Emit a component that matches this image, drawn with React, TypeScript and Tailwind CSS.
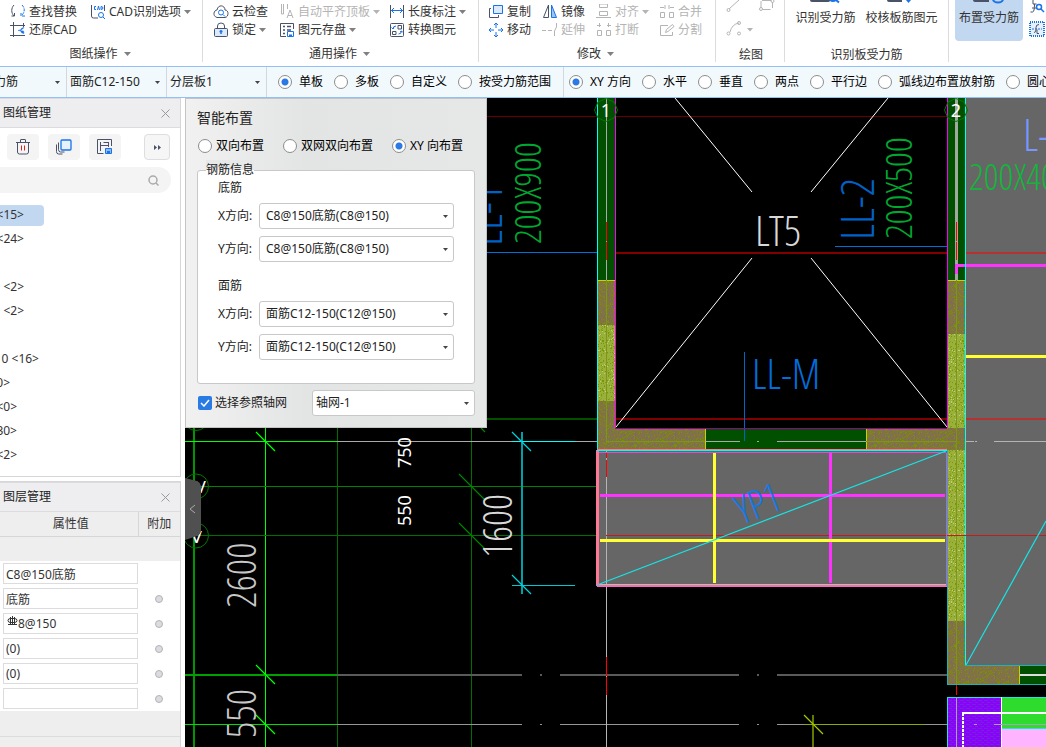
import React from 'react';

/* ---------- small shared pieces ---------- */

function Caret({ className = 'text-[#808080]' }: { className?: string }) {
  return (
    <svg width="7" height="4" viewBox="0 0 7 4" className={`shrink-0 ${className}`} aria-hidden="true">
      <path d="M0 0h7L3.500 4z" fill="currentColor" />
    </svg>
  );
}

function Radio({ name, label, checked = false, gap = 'gap-[7px]' }: { name: string; label: string; checked?: boolean; gap?: string }) {
  return (
    <label className={`flex shrink-0 items-center whitespace-nowrap text-black ${gap}`}>
      <input
        type="radio"
        name={name}
        defaultChecked={checked}
        className="size-[14px] shrink-0 appearance-none rounded-full border border-[#8c8c8c] bg-white checked:bg-[radial-gradient(circle,#2a7ae4_0_3px,#fff_4px)]"
      />
      {label}
    </label>
  );
}

function Drop({ label, value, className }: { label: string; value: string; className: string }) {
  return (
    <div className="relative flex items-center">
      <select aria-label={label} className={`appearance-none text-[#222] outline-none ${className}`}>
        <option>{value}</option>
      </select>
      <svg width="5" height="3" viewBox="0 0 5 3" className="pointer-events-none absolute right-[6px]" aria-hidden="true">
        <path d="M0 0h5L2.500 3z" fill="#444" />
      </svg>
    </div>
  );
}

type ToolProps = { label: string; icon: React.ReactNode; caret?: boolean; off?: boolean };

function Tool({ label, icon, caret, off }: ToolProps) {
  return (
    <button type="button" className={`flex h-6 items-center gap-[3px] whitespace-nowrap ${off ? 'text-[#b4b4b4]' : 'text-[#333]'}`}>
      <svg width="16" height="16" viewBox="0 0 16 16" fill="none" stroke="currentColor" className="shrink-0" aria-hidden="true">
        {icon}
      </svg>
      {label}
      {caret && <Caret className={off ? 'text-[#b4b4b4]' : 'text-[#808080]'} />}
    </button>
  );
}

const B = '#1a73e8';
const S = '#4a5268';

const icons = {
  find: (
    <>
      <path d="M4 1C1 4 1 9 4 12M1.500 12H4.500V9" stroke={S} />
      <path d="M12 1c3 3 3 7 0 10M15 12h-4V9" stroke={B} strokeDasharray="3 1" />
    </>
  ),
  cadOpt: (
    <>
      <path d="M1.500 1v11q0 2 2 2H8M14.500 1v6" stroke={S} />
      <path d="M6 2.500H4.500v3H6M7.500 6l1-4 1 4M11 2.500v3q2 0 2-1.500t-2-1.500" stroke={B} />
      <circle cx="11" cy="11" r="2.500" stroke={B} />
      <path d="M13 13l2 2" stroke={B} />
    </>
  ),
  restore: (
    <>
      <path d="M0 3.500h15M3.500 0v15M0 13.500h15M13.500 1v4" stroke={S} />
      <path d="M14 5.500q-3 0-3.500 3 .500 3 3.500 3l-.500-2.500L8 8.500l4-1z" fill={B} stroke={B} strokeWidth=".5" />
    </>
  ),
  cloud: (
    <>
      <path d="M4 13.500C-1 12 1 6 4 6 5 0 12 1 12 6c4 0 4 7 0 7.500z" stroke={S} />
      <circle cx="8" cy="8.500" r="2.500" stroke={B} />
      <path d="M10 10.500l2 2" stroke={B} />
    </>
  ),
  lock: (
    <>
      <path d="M4.500 6V4q0-3 3.500-3t3.500 3v2" stroke={S} />
      <rect x="1.500" y="6.500" width="13" height="8" rx="1" stroke={S} fill="#dbe9fb" />
      <path d="M8 8v4M6.500 9.500h3" stroke={B} strokeWidth="1.500" />
    </>
  ),
  align: <path d="M2.500 0v10h2V0M8.500 0v5M8 14l3-8 3 8M9 11.500h4" />,
  store: (
    <>
      <path d="M14.500 7V1.500h-13v13H7" stroke={S} />
      <path d="M4 4.500h2M8 4.500h4M4 8h2M4 11.500h2M8 8h4" stroke={S} strokeWidth="1.500" />
      <path d="M8.500 9.500h6v5h-6z" stroke={B} />
      <path d="M10 12.500h3v2h-3z" fill={B} stroke="none" />
    </>
  ),
  dim: (
    <>
      <path d="M1.500 1v13M14.500 1v13" stroke={S} />
      <path d="M2 6.500h12M5 4L2.500 6.500 5 9M11 4l2.500 2.500L11 9" stroke={B} />
    </>
  ),
  convert: (
    <>
      <rect x="1.500" y="1.500" width="13" height="13" rx="1" stroke={S} />
      <path d="M9 3.500h3.500V7H9zM3.500 9.500H7v3H3.500z" stroke={S} />
      <path d="M4 7q0-3 3-3M5 5.500L4 7 2.500 5.500M12.500 9q0 3-3 3M11 10l1.500-1L14 10.500" stroke={B} />
    </>
  ),
  copy: (
    <>
      <path d="M5.500 1.500h9v8h-9z" stroke={B} fill="#dbe9fb" />
      <path d="M3 4.500H1.500v9h9V11" stroke={S} />
    </>
  ),
  mirror: (
    <>
      <path d="M6.500 1v12.500h-5z" stroke={S} />
      <path d="M9.500 1v12.500h5z" stroke={B} fill="#9cc3f5" />
    </>
  ),
  move: (
    <path
      d="M8 1v5M8 10v5M1 8h5M10 8h5M6 3l2-2 2 2M6 13l2 2 2-2M3 6L1 8l2 2M13 6l2 2-2 2"
      stroke={B}
    />
  ),
  alignTo: <path d="M3.500 0h8v3.500h-8zM3.500 7.500h8v4h-8zM0 13.500h15" />,
  merge: <path d="M1.500 8.500h4v5h-4zM10.500 8.500h4v5h-4zM1 3.500h4M11 3.500h4M6 1v4M10 1v4" />,
  extend: <path d="M0 8.500h4M6 8.500h4M14.500 1v4l-2 4v5" />,
  breakIt: <path d="M1.500 8.500h4v5h-4zM10.500 8.500h4v5h-4zM1 3.500h4M3.500 1v4M11 3.500h4M12.500 1v4" />,
  split: <path d="M9 3.500H1.500v10h12V10M6.500 10.500l1-3 6-5 1.500 2-6 5z" />,
};

const groupTitle = 'flex h-[23px] shrink-0 items-center justify-center gap-[6px] whitespace-nowrap text-[#333]';

function Ribbon() {
  return (
    <header className="flex h-[67px] shrink-0 overflow-hidden border-b border-[#90c0f5] bg-white pb-1 text-[#333]">
      <section className="flex w-[203px] shrink-0 flex-col border-r border-[#dcdcdc] pl-[10px]">
        <div className="grid h-[18px] shrink-0 grid-cols-[80px_auto] items-center pb-[6px]">
          <Tool label="查找替换" icon={icons.find} />
          <Tool label="CAD识别选项" icon={icons.cadOpt} caret />
        </div>
        <div className="flex h-6 shrink-0 items-center">
          <Tool label="还原CAD" icon={icons.restore} />
        </div>
        <div className={`${groupTitle} pr-3`}>
          图纸操作 <Caret />
        </div>
      </section>

      <section className="flex w-[276px] shrink-0 flex-col border-r border-[#dcdcdc] pl-[10px]">
        <div className="grid h-[18px] shrink-0 grid-cols-[66px_110px_auto] items-center pb-[6px]">
          <Tool label="云检查" icon={icons.cloud} />
          <Tool label="自动平齐顶板" icon={icons.align} caret off />
          <Tool label="长度标注" icon={icons.dim} caret />
        </div>
        <div className="grid h-6 shrink-0 grid-cols-[66px_110px_auto] items-center">
          <Tool label="锁定" icon={icons.lock} caret />
          <Tool label="图元存盘" icon={icons.store} caret />
          <Tool label="转换图元" icon={icons.convert} />
        </div>
        <div className={`${groupTitle} pr-3`}>
          通用操作 <Caret />
        </div>
      </section>

      <section className="flex w-[237px] shrink-0 flex-col border-r border-[#dcdcdc] pl-[9px]">
        <div className="grid h-[18px] shrink-0 grid-cols-[54px_54px_63px_auto] items-center pb-[6px]">
          <Tool label="复制" icon={icons.copy} />
          <Tool label="镜像" icon={icons.mirror} />
          <Tool label="对齐" icon={icons.alignTo} caret off />
          <Tool label="合并" icon={icons.merge} off />
        </div>
        <div className="grid h-6 shrink-0 grid-cols-[54px_54px_63px_auto] items-center">
          <Tool label="移动" icon={icons.move} />
          <Tool label="延伸" icon={icons.extend} off />
          <Tool label="打断" icon={icons.breakIt} off />
          <Tool label="分割" icon={icons.split} off />
        </div>
        <div className={`${groupTitle} pr-3`}>
          修改 <Caret />
        </div>
      </section>

      <section className="flex w-[69px] shrink-0 flex-col items-center border-r border-[#dcdcdc] pl-[2px]">
        <svg width="50" height="43" viewBox="0 0 50 43" fill="none" stroke="#b4b4b4" className="shrink-0" aria-hidden="true">
          <path d="M3 9L13 0M35 1v7M36.500 9.500h8M46.500 2v6M36 .500h9M4 32q2-8 9-9" />
          <circle cx="2.500" cy="10" r="1.500" />
          <circle cx="35" cy="9" r="1.500" />
          <circle cx="46.500" cy="1" r="1.500" />
          <circle cx="2.500" cy="33.500" r="1.500" />
          <circle cx="13" cy="23" r="1.500" />
          <circle cx="13" cy="33.500" r="1.500" />
          <path d="M21 28h6l-3 3.500z" fill="#b4b4b4" stroke="none" />
        </svg>
        <div className="flex h-6 shrink-0 items-center">绘图</div>
      </section>

      <section className="flex w-[164px] shrink-0 flex-col items-center border-r border-[#dcdcdc]">
        <div className="flex h-[43px] shrink-0 gap-[10px]">
          <button type="button" className="flex flex-col items-center">
            <svg width="40" height="8" viewBox="0 0 40 8" aria-hidden="true">
              <path d="M5 0h20v.500q0 1.500-2 1.500H7Q5 2 5 0z" fill={S} />
              <path d="M25 0q3 2 6 0l3 2.500" stroke={B} strokeWidth="2" fill="none" />
            </svg>
            <span className="h-5 leading-5">识别受力筋</span>
          </button>
          <button type="button" className="flex flex-col items-center">
            <svg width="40" height="8" viewBox="0 0 40 8" aria-hidden="true">
              <path d="M5 0h15v2H7Q5 2 5 0z" fill={S} />
              <path d="M24 0h5l-2.500 3z" fill={B} />
            </svg>
            <span className="h-5 leading-5">校核板筋图元</span>
          </button>
        </div>
        <div className="flex h-6 shrink-0 items-center">识别板受力筋</div>
      </section>

      <section className="flex min-w-0 flex-1 gap-[6px] overflow-hidden pl-[6px]">
        <button type="button" className="flex h-[41px] w-[68px] shrink-0 flex-col items-center rounded-b bg-[#c2d8f0]">
          <svg width="40" height="8" viewBox="0 0 40 8" aria-hidden="true">
            <path d="M4 0h16v2H6Q4 2 4 0z" fill={S} />
            <path d="M24 0q1 2.500 5 2.500T34 0" stroke={B} strokeWidth="2" fill="none" />
          </svg>
          <span className="h-5 leading-5">布置受力筋</span>
        </button>
        <svg width="17" height="42" viewBox="0 0 17 42" fill="none" className="shrink-0" aria-hidden="true">
          <path d="M4 0v4h3.500M1.500 12h2q2 0 2-8M3 8h4" stroke={S} />
          <circle cx="10" cy="7" r="2.500" stroke={B} strokeWidth="1.500" />
          <path d="M12 9l3 3" stroke={B} strokeWidth="1.500" />
          <rect x="1" y="22" width="14" height="14" fill="#e6f1fd" stroke={B} strokeWidth="2" strokeDasharray="1 1" />
          <path d="M3 29h10" stroke={B} strokeDasharray="2 1" />
          <path d="M10 24.500q-3 0-3 3v2q0 3-2 3M8 29.500v4h2" stroke={S} />
        </svg>
      </section>
    </header>
  );
}

function OptionsBar() {
  return (
    <div className="flex h-[31px] shrink-0 items-stretch overflow-hidden border-b border-[#90c0f5] bg-[#f2f9fd] text-[#222]">
      <div className="flex w-[67px] shrink-0 justify-end overflow-hidden border-r border-[#d4d8dc]">
        <Drop label="构件类型" value="受力筋" className="h-[30px] w-[90px] pl-[6px]" />
      </div>
      <div className="flex w-[100px] shrink-0 border-r border-[#d4d8dc]">
        <Drop label="构件" value="面筋C12-150" className="h-[30px] w-[99px] pl-[3px]" />
      </div>
      <div className="flex w-[100px] shrink-0 border-r border-[#d4d8dc]">
        <Drop label="分层" value="分层板1" className="h-[30px] w-[99px] pl-[3px]" />
      </div>
      <div className="flex shrink-0 items-center gap-[11px] border-r border-[#d4d8dc] pl-[11px] pr-3">
        <Radio name="scope" label="单板" checked />
        <Radio name="scope" label="多板" />
        <Radio name="scope" label="自定义" />
        <Radio name="scope" label="按受力筋范围" />
      </div>
      <div className="flex min-w-0 items-center gap-[11px] overflow-hidden pl-[5px]">
        <Radio name="direction" label="XY 方向" checked />
        <Radio name="direction" label="水平" />
        <Radio name="direction" label="垂直" />
        <Radio name="direction" label="两点" />
        <Radio name="direction" label="平行边" />
        <Radio name="direction" label="弧线边布置放射筋" />
        <Radio name="direction" label="圆心" />
      </div>
    </div>
  );
}

/* ---------- left panels ---------- */

function PanelHead({ title }: { title: string }) {
  return (
    <div className="flex h-[30px] shrink-0 items-center justify-between border-y border-[#dcdcde] bg-[#eeeef0] pl-[3px] pr-[10px] text-[#222]">
      <h2>{title}</h2>
      <button type="button" aria-label="关闭">
        <svg width="9" height="9" viewBox="0 0 9 9" stroke="#999" aria-hidden="true">
          <path d="M.500.500l8 8M8.500.500l-8 8" />
        </svg>
      </button>
    </div>
  );
}

const sheets = [
  { text: '<15>', cls: 'w-6', on: true },
  { text: '<24>', cls: 'w-6' },
  { text: '', cls: 'w-6' },
  { text: '<2>', cls: 'w-6' },
  { text: '<2>', cls: 'w-6' },
  { text: '', cls: 'w-6' },
  { text: '0 <16>', cls: 'w-[39px]' },
  { text: '<0>', cls: 'w-[10px]' },
  { text: '<0>', cls: 'w-[17px]' },
  { text: '<30>', cls: 'w-[17px]' },
  { text: '<2>', cls: 'w-[17px]' },
];

const toolBtn = 'flex h-[26px] w-8 items-center justify-center rounded bg-[#f4f4f5]';

function SheetPanel() {
  return (
    <section className="flex h-[379px] shrink-0 flex-col border-b border-r border-[#d6d6d8] bg-white">
      <PanelHead title="图纸管理" />
      <div className="flex items-center gap-[9px] pl-[7px] pr-[10px] pt-[6px]">
        <button type="button" aria-label="删除" className={toolBtn}>
          <svg width="14" height="16" viewBox="0 0 14 16" fill="none" stroke={S} aria-hidden="true">
            <path d="M0 3.500h14M4.500 3V1q0-.500.500-.500h4q.500 0 .500.500v2M1.500 4v9q0 2 2 2h7q2 0 2-2V4" />
            <path d="M5.500 6.500v5M8.500 6.500v5" stroke="#e02020" />
          </svg>
        </button>
        <button type="button" aria-label="复制图纸" className={toolBtn}>
          <svg width="16" height="16" viewBox="0 0 16 16" fill="none" stroke={S} aria-hidden="true">
            <rect x="5" y="1" width="10" height="10" rx="1" stroke={B} strokeWidth="1.300" fill="#e6f1fd" />
            <path d="M2.500 3.500v7q0 2.500 2 2.500h4M.500 5.500v7q0 2.500 2 2.500h4" />
          </svg>
        </button>
        <button type="button" aria-label="保存图纸" className={toolBtn}>
          <svg width="16" height="16" viewBox="0 0 16 16" fill="none" stroke={S} aria-hidden="true">
            <path d="M14.500 7V.500H.500v14h6M3.500 3v9M3.500 6.500h8M11.500 3v5M6.500 3.500h5" />
            <path d="M8.500 9.500h6v5h-6z" stroke={B} fill="#8fbcf5" />
            <path d="M10 12h3v2.500h-3z" fill={B} stroke="none" />
          </svg>
        </button>
        <button type="button" aria-label="更多" className="ml-auto flex size-[26px] items-center justify-center rounded border border-[#dedee0] bg-[#f6f6f7]">
          <svg width="7" height="5" viewBox="0 0 7 5" fill={S} aria-hidden="true">
            <path d="M0 0l3 2.500L0 5zM4 0l3 2.500L4 5z" />
          </svg>
        </button>
      </div>
      <label className="mr-[9px] mt-[7px] flex h-[26px] items-center rounded-r-full bg-[#f4f4f5] pr-3">
        <input type="text" aria-label="搜索图纸" className="h-full min-w-0 flex-1 bg-transparent outline-none" />
        <svg width="11" height="11" viewBox="0 0 11 11" fill="none" stroke="#aaa" strokeWidth="1.500" aria-hidden="true">
          <circle cx="5" cy="5" r="4" />
          <path d="M8 8l2.500 2.500" />
        </svg>
      </label>
      <ul className="pt-[10px]">
        {sheets.map((s, i) => (
          <li key={i} className="flex h-6 items-center">
            <span className={`flex h-[21px] items-center ${s.on ? 'w-11 rounded-r bg-[#c2d8f0]' : ''}`}>
              <span className={`flex justify-end overflow-hidden whitespace-nowrap text-[#333] ${s.cls}`}>{s.text}</span>
            </span>
          </li>
        ))}
      </ul>
    </section>
  );
}

const props = ['C8@150底筋', '底筋', '8@150', '(0)', '(0)', ''];

function LayerPanel() {
  return (
    <section className="flex flex-1 flex-col border-r border-t border-[#d6d6d8] bg-[#eeeeee]">
      <PanelHead title="图层管理" />
      <table className="w-full table-fixed border-collapse text-[#333]">
        <colgroup>
          <col className="w-[138px]" />
          <col />
        </colgroup>
        <thead>
          <tr className="h-6 bg-[#eeeeee]">
            <th className="border-b border-r border-[#d6d6d8] pl-1 font-normal">属性值</th>
            <th className="border-b border-[#d6d6d8] font-normal">附加</th>
          </tr>
        </thead>
        <tbody>
          <tr className="h-[25px]">
            <td colSpan={2} />
          </tr>
          {props.map((p, i) => (
            <tr key={i} className="h-[25px] bg-white">
              <td className="p-0 pl-[3px]">
                <div className="flex h-[21px] items-center border border-[#dcdcde] bg-white pl-[2px]">
                  {i === 2 && (
                    <svg width="11" height="11" viewBox="0 0 11 11" fill="none" stroke="#333" className="mb-1 ml-px shrink-0" aria-hidden="true">
                      <path d="M5.500 0v9M3.500 2.500h4q2.500 0 2.500 2t-2.500 2h-4q-2.500 0-2.500-2t2.500-2zM3.500 1v7M7.500 1v7M1 8.500h9" />
                    </svg>
                  )}
                  <input
                    type="text"
                    aria-label={`属性值${i + 1}`}
                    defaultValue={p}
                    className="h-full w-full min-w-0 bg-transparent outline-none"
                  />
                </div>
              </td>
              <td className="p-0">
                {i > 0 && (
                  <input
                    type="checkbox"
                    aria-label={`附加${i + 1}`}
                    className="mx-auto block size-2 appearance-none rounded-full border border-[#b4b4b8] bg-[#dcdce0]"
                  />
                )}
              </td>
            </tr>
          ))}
          <tr className="h-[25px] border-b border-[#dcdcde]">
            <td colSpan={2} />
          </tr>
        </tbody>
      </table>
    </section>
  );
}

/* ---------- floating dialog ---------- */

function RebarRow({ label, value }: { label: string; value: string }) {
  return (
    <div className="flex h-[26px] items-center justify-between">
      <span>{label}</span>
      <Drop label={label} value={value} className="h-[26px] w-[195px] rounded-[3px] border border-[#c8c8c8] bg-white pl-[6px]" />
    </div>
  );
}

function SmartDialog() {
  return (
    <form className="absolute left-0 top-0 flex w-[302px] flex-col border border-[#c4c4c4] bg-[linear-gradient(90deg,#f0f1f0,#e3e4e4_40%,#e6e7e7)] px-[11px] pb-[11px] pt-[9px] text-[#222]">
      <h2 className="text-sm leading-5">智能布置</h2>
      <div className="mt-2 flex h-5 items-center gap-[19px] pl-px">
        <Radio name="mode" label="双向布置" gap="gap-1" />
        <Radio name="mode" label="双网双向布置" gap="gap-1" />
        <Radio name="mode" label="XY 向布置" checked gap="gap-1" />
      </div>
      <fieldset className="mt-1 flex flex-col">
        <legend className="relative float-left ml-[9px] h-5 self-start bg-[linear-gradient(#e7e8e8_10px,#fff_10px)] leading-5">钢筋信息</legend>
        <div className="-mt-[10px] flex flex-col rounded-[3px] border border-[#c8c8c8] bg-white px-5 pb-[23px] pt-[9px]">
          <span className="leading-4">底筋</span>
          <div className="mt-[7px] flex flex-col gap-[7px]">
            <RebarRow label="X方向:" value="C8@150底筋(C8@150)" />
            <RebarRow label="Y方向:" value="C8@150底筋(C8@150)" />
          </div>
          <span className="mt-4 leading-4">面筋</span>
          <div className="mt-[7px] flex flex-col gap-[7px]">
            <RebarRow label="X方向:" value="面筋C12-150(C12@150)" />
            <RebarRow label="Y方向:" value="面筋C12-150(C12@150)" />
          </div>
        </div>
      </fieldset>
      <div className="mt-[6px] flex items-center justify-between pl-px">
        <label className="flex items-center gap-[3px]">
          <span className="grid size-[14px] place-items-center">
            <input type="checkbox" defaultChecked className="col-start-1 row-start-1 size-[14px] appearance-none rounded-[2px] bg-[#2a7ae4]" />
            <svg width="10" height="8" viewBox="0 0 10 8" className="pointer-events-none col-start-1 row-start-1" aria-hidden="true">
              <path d="M1 4l3 3 5-6" fill="none" stroke="#fff" strokeWidth="1.500" />
            </svg>
          </span>
          选择参照轴网
        </label>
        <Drop label="参照轴网" value="轴网-1" className="h-[26px] w-[163px] rounded-[3px] border border-[#c8c8c8] bg-white pl-[3px]" />
      </div>
    </form>
  );
}

/* ---------- CAD drawing ---------- */

function speckles(seed: number, count: number, colors: string[]) {
  let s = seed;
  const next = () => {
    s = (s * 16807) % 2147483647;
    return s / 2147483647;
  };
  return Array.from({ length: count }, (_, i) => (
    <rect key={i} x={Math.floor(next() * 40)} y={Math.floor(next() * 40)} width="1" height="1" fill={colors[Math.floor(next() * colors.length)]} />
  ));
}

const cadFont =
  '"Noto Sans ExtraCondensed Thin","Noto Sans ExtraCondensed ExtraLight","Noto Sans ExtraCondensed Light","Noto Sans ExtraCondensed","Open Sans Condensed Light","Open Sans Condensed","Roboto Condensed Light","Roboto Condensed","Liberation Sans Narrow","Roboto",sans-serif';

function CadText({ x, y, text, color, turn = 0, size = 30 }: { x: number; y: number; text: string; color: string; turn?: number; size?: number }) {
  return (
    <text transform={`translate(${x} ${y}) rotate(${turn})`} fontFamily={cadFont} fontWeight={100} fontSize={size} fill={color}>
      {text}
    </text>
  );
}

function Drawing() {
  const gaps = (y: number) => `M337 ${y}H522M540 ${y}h2M560 ${y}H739M757 ${y}h2M777 ${y}H947`;
  return (
    <svg viewBox="185 98 861 649" preserveAspectRatio="xMinYMin slice" className="absolute inset-0 size-full" aria-label="板平面图" fill="none">
      <defs>
        <pattern id="brown" width="40" height="40" patternUnits="userSpaceOnUse">
          <rect width="40" height="40" fill="#80753f" />
          {speckles(7, 520, ['#7a9000', '#749600', '#8a6a50', '#806080'])}
        </pattern>
        <pattern id="olive" width="40" height="40" patternUnits="userSpaceOnUse">
          <rect width="40" height="40" fill="#9ab03c" />
          {speckles(19, 420, ['#78a000', '#789600', '#8aa818', '#c4cc88'])}
        </pattern>
        <pattern id="brick" width="6" height="4" patternUnits="userSpaceOnUse">
          <rect width="6" height="4" fill="#8c00ff" />
          <path d="M0 .500h4M3 2.500h3" stroke="#7028d0" />
        </pattern>
      </defs>
      <rect x="185" y="98" width="861" height="649" fill="#000" />

      {/* axis grid */}
      <g shapeRendering="crispEdges">
        <path d="M194 428V747" stroke="#009600" strokeWidth="2" />
        <path d="M265.500 428V747M185 441.500H337" stroke="#00ff00" />
        <path d="M337.500 428V747M471.500 428V747M185 535.500H606" stroke="#006e00" />
        <path d="M185 486.500H606" stroke="#008200" />
        <path d="M185 675H337" stroke="#00a000" strokeWidth="2" />
        <path d="M185 724.500H337" stroke="#00dc00" />
        <path d="M487 419H597" stroke="#005000" strokeWidth="2" />
        <path d="M487 116.500H948" stroke="#640000" />
        <path d="M337 441.500H597" stroke="#aaa" />
        <path d={gaps(675)} stroke="#5a5a5a" strokeWidth="2" />
        <path d={gaps(724.5)} stroke="#969696" />
        <path d="M606.500 586V747" stroke="#b4b4b4" />
        <path d="M606.500 657V676M606.500 677V695" stroke="#f00" />
      </g>
      <path d="M256 432l19 19M256 665l19 19M256 715l19 19" stroke="#00ff00" strokeWidth="1.300" />
      <path d="M459 474l26 26M459 523l26 26M481 428l4 4" stroke="#008200" strokeWidth="1.300" />
      <g stroke="#007800">
        <circle cx="196" cy="486.500" r="12.500" />
        <circle cx="196" cy="535.500" r="12.500" />
        <circle cx="196" cy="418" r="12.500" />
      </g>
      <g fill="#fff" fontFamily="'DejaVu Sans',sans-serif" fontSize="16">
        <text x="195" y="493">V</text>
        <text x="191" y="543">V</text>
      </g>

      {/* dimension line */}
      <g shapeRendering="crispEdges">
        <path d="M522 432V594" stroke="#00a0a8" strokeWidth="2" />
        <path d="M512 441.500h63" stroke="#00ffff" />
        <path d="M512 585.500h63" stroke="#00c8d2" />
      </g>
      <path d="M512 432l19 19M512 575l19 19" stroke="#00d2dc" strokeWidth="1.300" />

      {/* right slab */}
      <rect x="965" y="98" width="81" height="568" fill="#666" />
      <g shapeRendering="crispEdges">
        <path d="M607 253H947M616 419H947" stroke="#820000" strokeWidth="2" />
        <path d="M965 253h81M965 419h81" stroke="#b43232" strokeWidth="2" />
        <path d="M487 252.500H606M835 246.500H957" stroke="#0070d8" />
        <path d="M966 356h80" stroke="#ffff32" strokeWidth="3" />
        <path d="M966 441.500h8M975 441.500h2M994 441.500h52" stroke="#b4b4b4" />
      </g>

      {/* stair void diagonals */}
      <path d="M675 98L752 192M888 98L811 192M752 258L616 427M811 258L947 427" stroke="#fff" />

      {/* beams and walls */}
      <g shapeRendering="crispEdges">
        <path d="M597 98h18v182h-18zM947 98h18v182h-18zM705 429h162v21H705zM1020 666h26v18h-26z" fill="#005000" />
        <path d="M597 280h18v45h-18zM597 401h18v27h90v22H597zM947 280h18v54h-18zM866 428h99v22h-99zM947 621h18v45h55v18h-73z" fill="url(#brown)" />
        <path d="M597 325h18v76h-18zM947 334h18v94h-18zM947 450h18v171h-18z" fill="url(#olive)" />
        <path d="M597 280.500h18M947 280.500h18M705.500 429v21M866.500 429v21M1019.500 666v18" stroke="#c8d200" />
        <path d="M606.500 98V280M705 441.500h35M757 441.500h2M777 441.500h89" stroke="#aaa" />
        <path d="M606.500 280V441M606 441.500h99M866 441.500h90M956.500 280V684" stroke="#7d9619" />
        <path d="M956.500 98V280" stroke="#a0a8a0" strokeWidth="3" />
        <path d="M606.500 222V241M606.500 242V260M956.500 222V241M956.500 242V260M956.500 684V695" stroke="#f00" />
        <path d="M956.500 264V274M957 265H1046" stroke="#ff32ff" strokeWidth="3" />
        <path d="M1020 675h26" stroke="#ddd" strokeWidth="2" />
        <path d="M744.500 352V441" stroke="#0064c8" />
        <path d="M597.500 98V450" stroke="#00ffff" />
        <path d="M615.500 98V428M947.500 98V428" stroke="#ff00ff" />
        <path d="M615 428.500H947" stroke="#960096" />
        <path d="M965.500 98V666" stroke="#00ffff" />
        <path d="M947.500 450V684M947 684.500h99M965 665.500h81" stroke="#1eb4b4" />
      </g>

      {/* axis bubbles */}
      <g stroke="#007800">
        <path d="M606 98.500l8 3.500 3.500 8-3.500 8-8 3.500-8-3.500-3.500-8 3.500-8zM956 98.500l8 3.500 3.500 8-3.500 8-8 3.500-8-3.500-3.500-8 3.500-8z" />
      </g>
      <g fill="#fff" fontFamily="'Noto Sans',sans-serif" fontSize="18" textAnchor="middle">
        <text x="606" y="117">1</text>
        <text x="956" y="117">2</text>
      </g>

      {/* balcony slab */}
      <g shapeRendering="crispEdges">
        <rect x="597" y="450" width="350" height="136" fill="#666" />
        <path d="M606.500 450V586" stroke="#b4b4b4" />
        <path d="M606.500 452V458M606.500 460V477" stroke="#f00" />
        <path d="M606 535.500H1046" stroke="#be1e1e" />
        <path d="M600 495.500H945M830.500 453V583" stroke="#ff32ff" strokeWidth="3" />
        <path d="M600 540.500H945M714.500 453V583" stroke="#ffff32" strokeWidth="3" />
        <path d="M597.500 450V586" stroke="#ff7896" strokeWidth="3" />
        <path d="M597 585.500H947" stroke="#ff64c8" strokeWidth="2" />
        <path d="M599 584.500H946" stroke="#b4c88c" />
        <path d="M599 452.500H946M946.500 453V586" stroke="#dc50c8" />
        <path d="M597 449.500H947" stroke="#ff7896" />
        <path d="M597 450.500H947" stroke="#00ffff" />
      </g>
      <path d="M597 585L946 451M966 665L1046 521" stroke="#14e6e6" strokeWidth="1.200" />

      {/* lower-right stair core */}
      <g shapeRendering="crispEdges">
        <rect x="947" y="697" width="54" height="50" fill="url(#brick)" />
        <rect x="1002" y="697" width="44" height="31" fill="#2ddc2d" />
        <rect x="1002" y="729" width="44" height="18" fill="#ffb4ff" />
        <path d="M947 697.500h99M947.500 697V747M1002 728.500h44" stroke="#1ee6e6" />
        <path d="M1001.500 697V747" stroke="#fff" />
        <path d="M962 713h84" stroke="#fff" strokeWidth="2" />
        <path d="M963 713V747" stroke="#fff" strokeWidth="2" strokeDasharray="3 1" />
        <path d="M956.500 697V747M974 724.500h3M994 724.500h52" stroke="#aaa0c0" />
        <path d="M813 715V747" stroke="#647800" strokeWidth="2" />
        <path d="M804 724.500H925" stroke="#8caa00" />
      </g>
      <path d="M804 715l19 19" stroke="#a0c800" strokeWidth="1.300" />

      {/* lettering */}
      <CadText x={755} y={246} text="LT5" color="#d8d8d8" size={43} />
      <CadText x={752} y={389} text="LL-M" color="#006edc" size={42} />
      <CadText x={541} y={244} text="200X900" color="#00a832" turn={-90} size={37} />
      <CadText x={912} y={239} text="200X500" color="#00a832" turn={-90} size={37} />
      <CadText x={874} y={240} text="LL-2" color="#0062c4" turn={-90} size={46} />
      <CadText x={502} y={246} text="LL-1" color="#0062c4" turn={-90} size={46} />
      <CadText x={1023} y={151} text="L-1" color="#7896ff" size={44} />
      <CadText x={969} y={190} text="200X400" color="#14b43c" size={37} />
      <CadText x={512} y={558} text="1600" color="#d8d8d8" turn={-90} size={40} />
      <CadText x={256} y={608} text="2600" color="#c8c8c8" turn={-90} size={41} />
      <CadText x={256} y={738} text="550" color="#c8c8c8" turn={-90} size={41} />
      <CadText x={742} y={525} text="YP1" color="#1478e6" turn={-21} size={40} />
      <g fill="#fff" fontFamily="'Noto Sans',sans-serif" fontSize="18">
        <text transform="translate(411 468) rotate(-90)">750</text>
        <text transform="translate(411 526) rotate(-90)">550</text>
      </g>
    </svg>
  );
}

export default function App() {
  return (
    <div className="flex min-h-screen flex-col overflow-hidden bg-white font-['Noto_Sans','Noto_Sans_CJK_SC',sans-serif] text-xs">
      <Ribbon />
      <OptionsBar />
      <div className="flex flex-1 gap-1">
        <aside className="flex w-[181px] shrink-0 flex-col gap-1">
          <SheetPanel />
          <LayerPanel />
        </aside>
        <main className="relative min-w-0 flex-1 overflow-hidden bg-black">
          <Drawing />
          <button type="button" aria-label="收起" className="absolute left-0 top-[380px]">
            <svg width="16" height="62" viewBox="0 0 16 62" aria-hidden="true">
              <path d="M0 0l12 3q4 2 4 6v43q0 4-4 6L0 62z" fill="#505050" />
              <path d="M10 27l-5 4 5 4" fill="none" stroke="#aaa" />
            </svg>
          </button>
          <SmartDialog />
        </main>
      </div>
    </div>
  );
}
